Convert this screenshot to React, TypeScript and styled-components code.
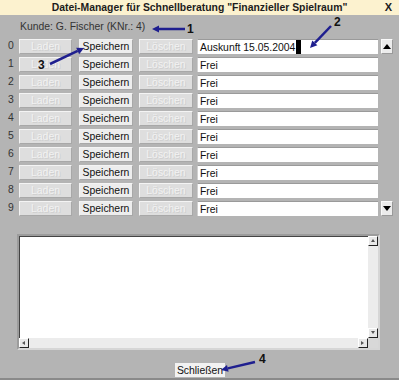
import React from "react";
import styled, { createGlobalStyle } from "styled-components";

const Global = createGlobalStyle`
  html, body { margin: 0; padding: 0; background: #b4b4b4; }
  body { font-family: "Liberation Sans", Arial, sans-serif; }
`;

const Window = styled.div`
  position: relative;
  width: 399px;
  height: 380px;
  box-sizing: border-box;
  background: #b4b4b4;
  border-bottom: 2px solid #8a8a8a;
  display: flex;
  flex-direction: column;
  font-family: "Liberation Sans", Arial, sans-serif;
  font-size: 10.4px;
  color: #222;
  overflow: hidden;
`;

const TitleBar = styled.div`
  height: 15px;
  background: #fcf2cf;
  display: flex;
  align-items: center;
  justify-content: center;
  position: relative;
  font-weight: bold;
  font-size: 10.4px;
  color: #1c1c1c;
`;

const Close = styled.span`
  position: absolute;
  right: 7px;
  top: 1px;
  font-size: 11px;
  font-weight: bold;
`;

const Customer = styled.div`
  height: 23px;
  padding-left: 20px;
  display: flex;
  align-items: center;
  color: #333;
`;

const Rows = styled.div`
  display: flex;
  flex-direction: column;
  gap: 3px;
  padding-top: 1px;
`;

const Row = styled.div`
  display: flex;
  height: 15px;
  align-items: stretch;
`;

const Index = styled.span`
  width: 11px;
  padding-left: 8px;
  line-height: 13px;
  color: #333;
`;

const Btn = styled.div<{ $disabled?: boolean; $ml?: number }>`
  width: ${(p) => (p.$ml ? 54 : 53)}px;
  margin-left: ${(p) => p.$ml ?? 0}px;
  box-sizing: border-box;
  background: ${(p) => (p.$disabled ? "#dedede" : "#ededed")};
  border: 1px solid;
  border-color: #f4f4f4 #a8a8a8 #a8a8a8 #f4f4f4;
  display: flex;
  align-items: center;
  justify-content: center;
  color: ${(p) => (p.$disabled ? "#f2f2f2" : "#111")};
  text-shadow: ${(p) => (p.$disabled ? "1px 1px 0 #cfcfcf" : "none")};
`;

const Field = styled.div`
  width: 181px;
  margin-left: 4px;
  box-sizing: border-box;
  background: #fff;
  border-top: 1px solid #9a9a9a;
  border-left: 1px solid #d0d0d0;
  display: flex;
  align-items: center;
  padding-left: 2px;
  color: #111;
`;

const Caret = styled.span`
  display: inline-block;
  width: 5px;
  height: 14px;
  background: #000;
  margin-left: 1px;
`;

const ScrollBtn = styled.div`
  margin-left: 3px;
  width: 12px;
  box-sizing: border-box;
  background: #ececec;
  border: 1px solid;
  border-color: #fafafa #9a9a9a #9a9a9a #fafafa;
  display: flex;
  align-items: center;
  justify-content: center;
`;

const TextBox = styled.div`
  margin: 18px 0 0 17px;
  width: 363px;
  height: 116px;
  box-sizing: border-box;
  border: 2px solid;
  border-color: #9c9c9c #d6d6d6 #d6d6d6 #9c9c9c;
  display: grid;
  grid-template-columns: 1fr 10px;
  grid-template-rows: 1fr 10px;
  background: #fff;
`;

const TextArea = styled.div`
  background: #fff;
  border-top: 1px solid #444;
  border-left: 1px solid #444;
`;

const VBar = styled.div`
  background: #ececec;
  display: flex;
  flex-direction: column;
  justify-content: space-between;
`;

const HBar = styled.div`
  background: #ececec;
  display: flex;
  justify-content: space-between;
`;

const Corner = styled.div`
  background: #d8d8d8;
`;

const Arrow = styled.div`
  width: 10px;
  height: 10px;
  box-sizing: border-box;
  background: #e8e8e8;
  border: 1px solid;
  border-color: #fff #222 #222 #fff;
  display: flex;
  align-items: center;
  justify-content: center;
`;

const Footer = styled.div`
  flex: 1;
  display: flex;
  justify-content: center;
  align-items: flex-start;
  padding-top: 13px;
`;

const CloseBtn = styled.div`
  height: 14px;
  padding: 0 2px;
  background: #f2f2f2;
  display: flex;
  align-items: center;
  color: #111;
  margin-left: 1px;
`;

const Overlay = styled.svg`
  position: absolute;
  left: 0;
  top: 0;
  pointer-events: none;
`;

const Num = styled.span<{ $x: number; $y: number }>`
  position: absolute;
  left: ${(p) => p.$x}px;
  top: ${(p) => p.$y}px;
  font-weight: bold;
  font-size: 12px;
  color: #111;
`;

const Tri = ({ up }: { up?: boolean }) => (
  <svg width="8" height="5" viewBox="0 0 8 5">
    <polygon points={up ? "0,5 8,5 4,0" : "0,0 8,0 4,5"} fill="#000" />
  </svg>
);

const Tiny = ({ dir }: { dir: "up" | "down" | "left" | "right" }) => {
  const pts = {
    up: "1,4 5,4 3,1",
    down: "1,1 5,1 3,4",
    left: "4,1 4,5 1,3",
    right: "1,1 1,5 4,3",
  }[dir];
  return (
    <svg width="6" height="6" viewBox="0 0 6 6">
      <polygon points={pts} fill="#555" />
    </svg>
  );
};

const entries = [
  "Auskunft 15.05.2004",
  "Frei",
  "Frei",
  "Frei",
  "Frei",
  "Frei",
  "Frei",
  "Frei",
  "Frei",
  "Frei",
];

const ArrowLine = ({ x1, y1, x2, y2 }: { x1: number; y1: number; x2: number; y2: number }) => {
  const a = Math.atan2(y2 - y1, x2 - x1);
  const L = 7;
  const W = 3.5;
  const bx = x2 - L * Math.cos(a);
  const by = y2 - L * Math.sin(a);
  const px = -Math.sin(a) * W;
  const py = Math.cos(a) * W;
  return (
    <g>
      <line x1={x1} y1={y1} x2={bx} y2={by} stroke="#1f1f8f" strokeWidth="2.5" />
      <polygon points={`${x2},${y2} ${bx + px},${by + py} ${bx - px},${by - py}`} fill="#1f1f8f" />
    </g>
  );
};

export default function App() {
  return (
    <>
      <Global />
      <Window>
        <TitleBar>
          Datei-Manager für Schnellberatung "Finanzieller Spielraum"
          <Close>X</Close>
        </TitleBar>
        <Customer>Kunde: G. Fischer (KNr.: 4)</Customer>
        <Rows>
          {entries.map((e, i) => (
            <Row key={i}>
              <Index>{i}</Index>
              <Btn $disabled>Laden</Btn>
              <Btn $ml={7}>Speichern</Btn>
              <Btn $disabled $ml={6}>Löschen</Btn>
              <Field>
                {e}
                {i === 0 && <Caret />}
              </Field>
              {i === 0 && (
                <ScrollBtn>
                  <Tri up />
                </ScrollBtn>
              )}
              {i === 9 && (
                <ScrollBtn>
                  <Tri />
                </ScrollBtn>
              )}
            </Row>
          ))}
        </Rows>
        <TextBox>
          <TextArea />
          <VBar>
            <Arrow>
              <Tiny dir="up" />
            </Arrow>
            <Arrow>
              <Tiny dir="down" />
            </Arrow>
          </VBar>
          <HBar>
            <Arrow>
              <Tiny dir="left" />
            </Arrow>
            <Arrow>
              <Tiny dir="right" />
            </Arrow>
          </HBar>
          <Corner />
        </TextBox>
        <Footer>
          <CloseBtn>Schließen</CloseBtn>
        </Footer>
        <Overlay width="399" height="380">
          <ArrowLine x1={185} y1={29} x2={152} y2={29} />
          <ArrowLine x1={331} y1={26} x2={310} y2={48} />
          <ArrowLine x1={50} y1={64} x2={84} y2={48} />
          <ArrowLine x1={255} y1={362} x2={221} y2={370} />
        </Overlay>
        <Num $x={187} $y={22}>1</Num>
        <Num $x={334} $y={15}>2</Num>
        <Num $x={38} $y={58}>3</Num>
        <Num $x={259} $y={352}>4</Num>
      </Window>
    </>
  );
}
